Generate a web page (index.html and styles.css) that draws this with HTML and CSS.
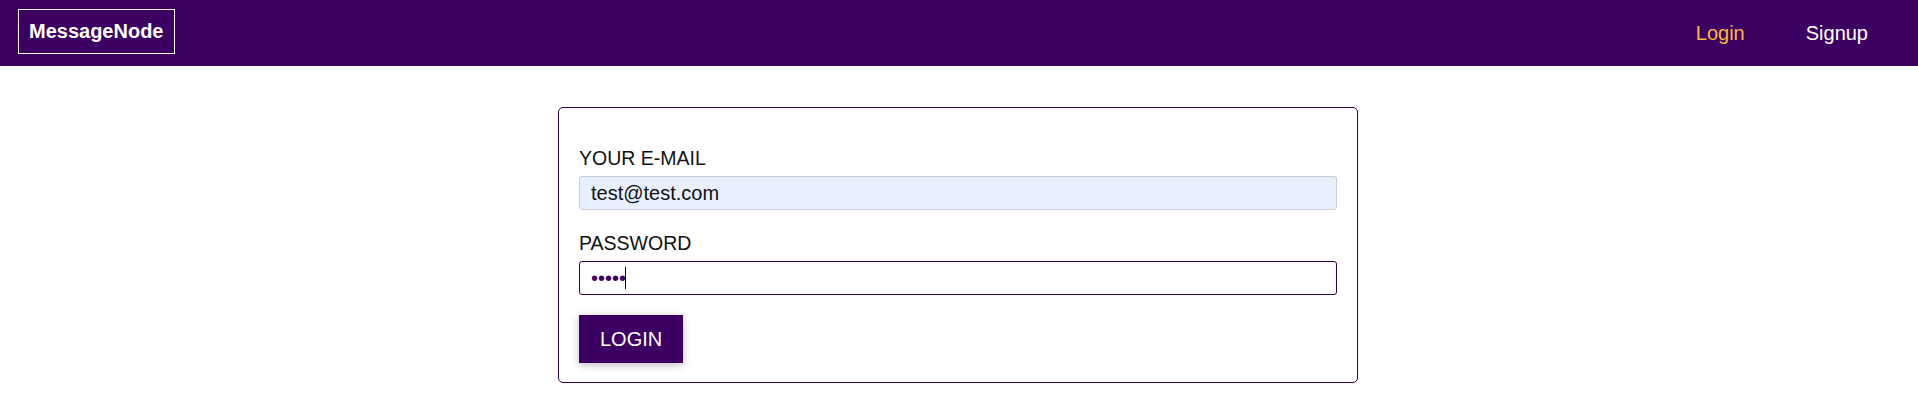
FILE: index.html
```html
<!DOCTYPE html>
<html lang="en">
<head>
<meta charset="utf-8">
<title>MessageNode</title>
<link rel="stylesheet" href="styles.css">
</head>
<body>
<header class="main-header">
  <div class="logo">MessageNode</div>
  <nav class="main-nav">
    <a class="nav-link active" href="#">Login</a>
    <a class="nav-link" href="#">Signup</a>
  </nav>
</header>
<main class="page">
  <section class="auth-card">
    <form class="auth-form">
      <div class="field">
        <label class="field-label" for="email">YOUR E-MAIL</label>
        <input class="field-input autofilled" id="email" type="email" value="test@test.com">
      </div>
      <div class="field">
        <label class="field-label" for="password">PASSWORD</label>
        <div class="input-wrap">
          <input class="field-input focused" id="password" type="password" value="12345">
          <span class="caret"></span>
        </div>
      </div>
      <div class="actions">
        <button class="btn" type="button">LOGIN</button>
      </div>
    </form>
  </section>
</main>
</body>
</html>
```
FILE: styles.css
```css
* { box-sizing: border-box; }

body {
  margin: 0;
  font-family: "Liberation Sans", Arial, sans-serif;
  background: #ffffff;
  color: #111111;
}

.main-header {
  height: 66px;
  background: #3b0062;
  display: flex;
  align-items: center;
  justify-content: space-between;
  padding: 0 50px 0 18px;
}

.logo {
  margin-top: -3px;
  border: 1px solid #ffffff;
  padding: 10px 10px;
  color: #ffffff;
  font-weight: bold;
  font-size: 20px;
  line-height: 23px;
}

.main-nav {
  display: flex;
  gap: 61px;
}

.nav-link {
  color: #ffffff;
  text-decoration: none;
  font-size: 20px;
  line-height: 23px;
}

.nav-link.active {
  color: #fab83f;
}

.page {
  padding-top: 41px;
  display: flex;
  justify-content: center;
}

.auth-card {
  width: 800px;
  margin-right: 2px;
  border: 1px solid #2e004d;
  border-radius: 5px;
  padding: 39px 20px 19px;
}

.auth-form {
  display: flex;
  flex-direction: column;
  gap: 22px;
}

.field {
  display: flex;
  flex-direction: column;
  gap: 6px;
}

.field-label {
  font-size: 19.5px;
  line-height: 23px;
  color: #111111;
}

.input-wrap {
  position: relative;
}

.field-input {
  display: block;
  width: 100%;
  height: 34px;
  padding: 0 11px;
  font-family: "Liberation Sans", Arial, sans-serif;
  font-size: 20px;
  color: #111111;
  border-radius: 3px;
  outline: none;
}

.field-input.autofilled {
  background: #e8f0fe;
  border: 1px solid #c9ced6;
}

.field-input.focused {
  background: #ffffff;
  border: 1px solid #2e004d;
  color: #3b0062;
  caret-color: transparent;
}

.caret {
  position: absolute;
  left: 46px;
  top: 6px;
  width: 1px;
  height: 22px;
  background: #1a0030;
}

.actions {
  display: flex;
  margin-top: -2px;
}

.btn {
  font-family: "Liberation Sans", Arial, sans-serif;
  font-size: 20px;
  line-height: 24px;
  padding: 11px 20px;
  background: #3b0062;
  color: #ffffff;
  border: 1px solid #3b0062;
  border-radius: 0;
  box-shadow: 0 2px 8px rgba(0, 0, 0, 0.26);
  cursor: pointer;
}
```
